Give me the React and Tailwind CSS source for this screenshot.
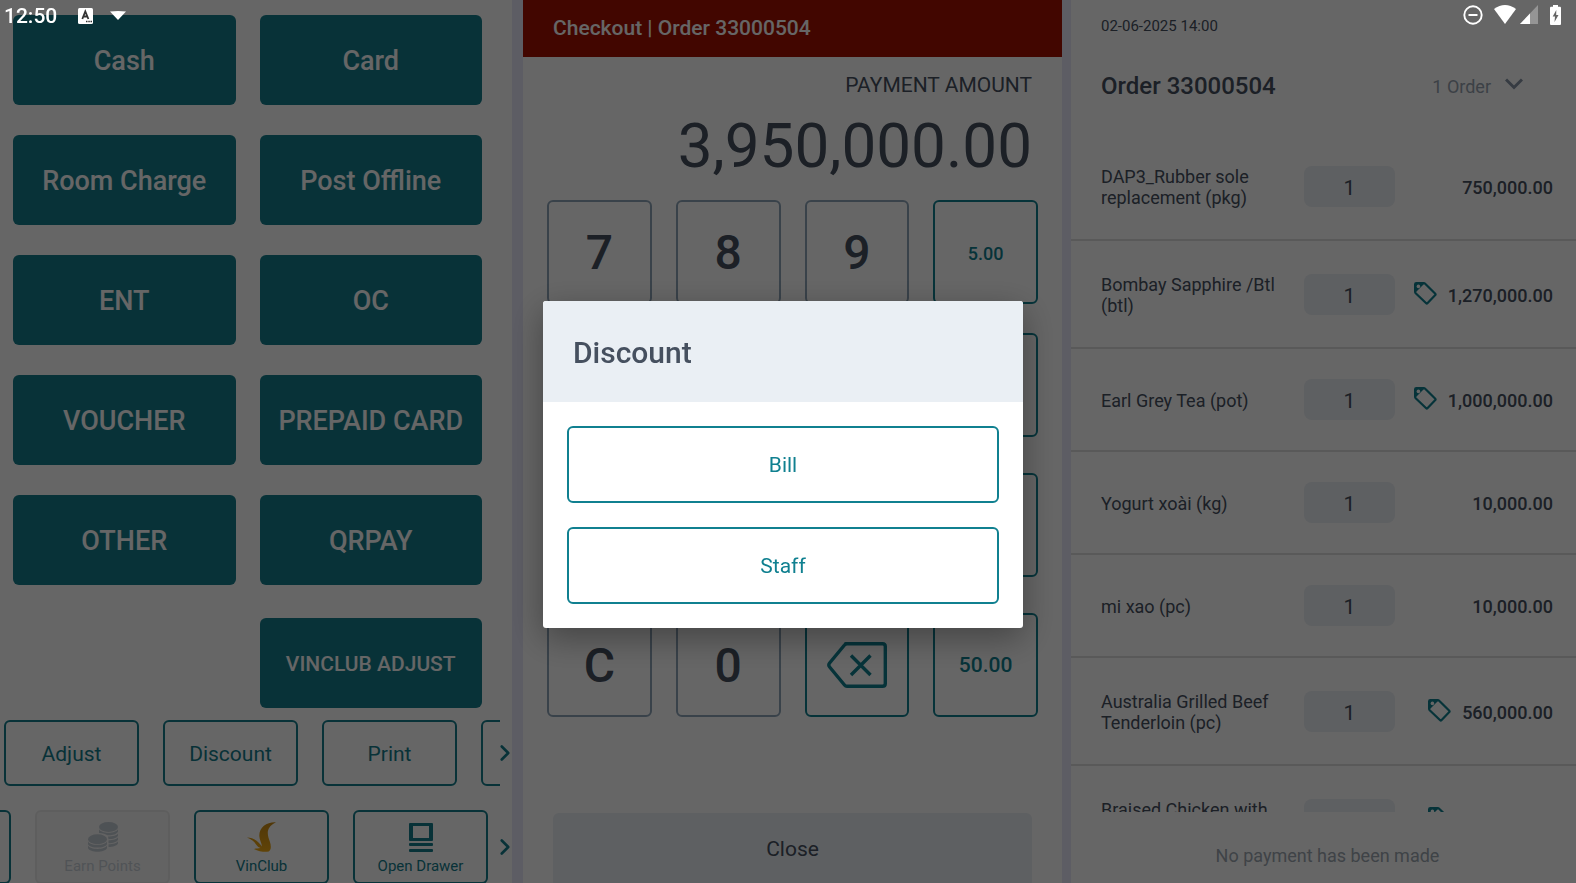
import { ChevronRight } from "lucide-react";

const PAYMENT_METHODS = [
  "Cash",
  "Card",
  "Room Charge",
  "Post Offline",
  "ENT",
  "OC",
  "VOUCHER",
  "PREPAID CARD",
  "OTHER",
  "QRPAY",
];

const ACTIONS = ["Adjust", "Discount", "Print", ""];

const KEY_ROWS = [
  { id: "top", keys: ["7", "8", "9"], amount: "5.00", amountClass: "text-[18px]", gap: "mb-[29px]" },
  { id: "upper", keys: ["", "", ""], amount: "", amountClass: "text-[21px]", gap: "mb-9" },
  { id: "lower", keys: ["", "", ""], amount: "", amountClass: "text-[21px]", gap: "mb-9" },
  { id: "bottom", keys: ["C", "0", "del"], amount: "50.00", amountClass: "text-[21px]", gap: "" },
];

const ITEMS = [
  { name: "DAP3_Rubber sole replacement (pkg)", qty: 1, price: "750,000.00" },
  { name: "Bombay Sapphire /Btl (btl)", qty: 1, price: "1,270,000.00", tag: true },
  { name: "Earl Grey Tea (pot)", qty: 1, price: "1,000,000.00", tag: true },
  { name: "Yogurt xoài (kg)", qty: 1, price: "10,000.00" },
  { name: "mi xao (pc)", qty: 1, price: "10,000.00" },
  { name: "Australia Grilled Beef Tenderloin (pc)", qty: 1, price: "560,000.00", tag: true },
  { name: "Braised Chicken with ginger (pc)", qty: 1, price: "450,000.00", tag: true },
];

function TagIcon() {
  return (
    <svg width="23" height="23" viewBox="0 0 23 23" className="-mt-1 shrink-0" aria-hidden="true">
      <path
        d="M1.100 9.800V2.300Q1.100 1.100 2.300 1.100H9.800Q10.600 1.100 11.200 1.700L21.300 11.800Q21.900 12.400 21.300 13L13.400 21.200Q12.800 21.800 12.200 21.200L1.700 11.200Q1.100 10.600 1.100 9.800Z"
        fill="none"
        stroke="#108090"
        strokeWidth="2.200"
      />
      <path d="M1 2.200Q1 1 2.200 1H11L1 11Z" fill="#108090" />
      <circle cx="4.400" cy="4.400" r="1.800" fill="#fff" />
    </svg>
  );
}

function BackspaceIcon() {
  return (
    <svg width="60" height="46" viewBox="0 0 60 46" fill="none" stroke="#108090" strokeWidth="3.4" aria-hidden="true">
      <path
        d="M18.5 1.700H55.500Q58.300 1.700 58.300 4.500V41.500Q58.300 44.300 55.500 44.300H20Q18.500 44.300 17.500 43L2.600 25Q1 23 2.600 21L17.500 3Q18.500 1.700 20 1.700Z"
        strokeLinejoin="round"
      />
      <path d="M24 13.500L43.500 33M43.500 13.500L24 33" />
    </svg>
  );
}

function CoinsIcon() {
  return (
    <svg width="30" height="30" viewBox="0 0 30 30" fill="#c4ccd4" aria-hidden="true">
      <ellipse cx="20.5" cy="5" rx="9.500" ry="5" />
      <path d="M11 7.200C13 11.800 28 11.800 30 7.200V9.800C28.500 12.600 23.500 13.500 19.500 13.200C17.500 11.800 15 11.200 11 10.900Z" />
      <path d="M20 14.400C25 14.400 29 13.300 30 11.400V13.800C29 16 25 17.200 20.500 17.200Z" />
      <path d="M20.500 18.300C25 18.200 29 17.200 30 15.300V17.700C29 19.800 25 21.100 20.500 21.200Z" />
      <path d="M20.500 22.300C25 22.200 29 21.200 30 19.300V21.500C29 23.700 25 25 20.500 25.100Z" />
      <ellipse cx="9.500" cy="17.300" rx="9.500" ry="5" />
      <path d="M0 19.500C2 24 17 24 19 19.500V22.200C17 26.700 2 26.700 0 22.200Z" />
      <path d="M0 23.500C2 28 17 28 19 23.500V26C17 31 2 31 0 26Z" />
    </svg>
  );
}

function VinClubIcon() {
  return (
    <svg width="30" height="30" viewBox="0 0 30 30" aria-hidden="true">
      <defs>
        <linearGradient id="vin" x1="0" y1="0" x2="0" y2="1">
          <stop offset="0" stopColor="#c98a14" />
          <stop offset="0.500" stopColor="#dc9a14" />
          <stop offset="1" stopColor="#f2aa16" />
        </linearGradient>
      </defs>
      <path
        d="M29 0.200C20 -0.300 12 5 12.300 14C12.500 18 14.500 20.500 15 24.500C11 19 7 15.800 0 15.500C5 17.500 7.500 20 9.500 23C10.500 24.500 12 25.500 13.500 26C11 26.500 9.500 26.200 7 27C11 29.300 16 30 20 29.800C24.500 29.300 24.500 24.500 22.800 19.500C20.800 13.500 17.500 6 29 0.200Z"
        fill="url(#vin)"
      />
    </svg>
  );
}

function DrawerIcon() {
  return (
    <svg width="24" height="29" viewBox="0 0 24 29" fill="#147d8c" aria-hidden="true">
      <path
        fillRule="evenodd"
        d="M1 0H23Q24 0 24 1V17Q24 18 23 18H1Q0 18 0 17V1Q0 0 1 0ZM4 3V15H20V3Z"
      />
      <rect y="20" width="24" height="3" rx="1" />
      <rect y="26" width="24" height="3" rx="1" />
    </svg>
  );
}

function StatusBar() {
  return (
    <div className="pointer-events-none fixed inset-x-0 top-0 z-50 flex h-[31px] items-center justify-between pl-1 pr-[15px] text-white">
      <div className="flex items-center">
        <span className="text-[21px] font-medium leading-8">12:50</span>
        <svg width="15" height="16" viewBox="0 0 15 16" className="ml-[21px]" aria-hidden="true">
          <rect width="15" height="16" rx="1.5" fill="#fff" />
          <path d="M4.300 11L7.300 3.500L10.400 11M5.300 8.500H9.300" fill="none" stroke="#333" strokeWidth="1.800" />
          <path d="M8 13.500H9.500M10.300 13.500H11.800M12.500 13.500H14" stroke="#333" strokeWidth="1.300" />
        </svg>
        <svg width="16" height="9" viewBox="0 0 16 9" className="ml-[17px]" aria-hidden="true">
          <path d="M0 0.500Q8 -0.500 16 0.500L8 9Z" fill="#fff" />
        </svg>
      </div>
      <div className="flex items-center pb-[2px]">
        <svg width="20" height="20" viewBox="0 0 20 20" fill="none" stroke="#fff" aria-hidden="true">
          <circle cx="10" cy="10" r="8.700" strokeWidth="1.900" />
          <path d="M5.500 10H14.500" strokeWidth="2" />
        </svg>
        <svg width="22" height="19" viewBox="0 0 22 19" className="ml-[11px]" aria-hidden="true">
          <path d="M0 4Q11 -4 22 4L11 19Z" fill="#fff" />
        </svg>
        <svg width="18" height="19" viewBox="0 0 18 19" className="ml-1" aria-hidden="true">
          <path d="M18 0V19H0Z" fill="#fff" fillOpacity="0.300" />
          <path d="M10 8.400V19H0Z" fill="#fff" />
        </svg>
        <svg width="11" height="20" viewBox="0 0 11 20" className="ml-3" aria-hidden="true">
          <path d="M3 0H8V1.800H10Q11 1.800 11 3V19Q11 20 10 20H1Q0 20 0 19V3Q0 1.800 1 1.800H3Z" fill="#fff" />
          <path d="M6.300 5L2.700 11.500H5L4.500 17L8.500 10H6.200Z" fill="#666" />
        </svg>
      </div>
    </div>
  );
}

function PaymentPanel() {
  return (
    <section className="min-w-0 overflow-hidden bg-white pt-[15px]">
      <div className="grid grid-cols-2 gap-x-6 gap-y-[30px] pl-[13px] pr-[30px]">
        {PAYMENT_METHODS.map((method) => (
          <button key={method} className="h-[90px] rounded-md bg-[#147d8c] pt-[2px] text-[27px] font-medium text-white">
            {method}
          </button>
        ))}
      </div>
      <div className="mt-[33px] grid grid-cols-2 gap-x-6 pl-[13px] pr-[30px]">
        <button className="col-start-2 h-[90px] rounded-md bg-[#147d8c] pt-[3px] text-[21px] font-medium text-white">
          VINCLUB ADJUST
        </button>
      </div>

      <div className="mt-3 flex items-center">
        <div className="flex min-w-0 flex-1 gap-6 overflow-hidden pl-1">
          {ACTIONS.map((action) => (
            <button
              key={action}
              aria-label={action || "More"}
              className="h-[66px] w-[135px] shrink-0 rounded-md border-2 border-[#147d8c] pt-[3px] text-[21px] text-[#147d8c]"
            >
              {action}
            </button>
          ))}
        </div>
        <button aria-label="Next actions" className="w-3 text-[#147d8c]">
          <ChevronRight size={26} strokeWidth={2.4} className="-ml-2" />
        </button>
      </div>

      <div className="mt-6 flex items-center">
        <div className="flex min-w-0 flex-1 justify-end gap-6 overflow-hidden pr-3">
          <button aria-label="Previous" className="h-[74px] w-[135px] shrink-0 rounded-md border-2 border-[#147d8c]" />
          <button
            disabled
            className="flex h-[74px] w-[135px] shrink-0 flex-col items-center rounded-md border-2 border-[#ececec] bg-[#f8f8f8] pt-[10px] text-[15px] leading-7 text-[#c9d0d8]"
          >
            <CoinsIcon />
            Earn Points
          </button>
          <button className="flex h-[74px] w-[135px] shrink-0 flex-col items-center rounded-md border-2 border-[#147d8c] pt-[10px] text-[15px] leading-7 text-[#147d8c]">
            <VinClubIcon />
            VinClub
          </button>
          <button className="flex h-[74px] w-[135px] shrink-0 flex-col items-center rounded-md border-2 border-[#147d8c] pt-[11px] text-[15px] leading-7 text-[#147d8c]">
            <DrawerIcon />
            Open Drawer
          </button>
        </div>
        <button aria-label="Next tools" className="w-3 text-[#147d8c]">
          <ChevronRight size={26} strokeWidth={2.4} className="-ml-2" />
        </button>
      </div>
    </section>
  );
}

function CheckoutPanel() {
  return (
    <section className="flex min-w-0 flex-col overflow-hidden border-l-[11px] border-r-[9px] border-[#e8e8fa] bg-white text-[#46505f]">
      <header className="h-[57px] shrink-0 bg-[#a50f00] pl-[30px]">
        <h1 className="text-[21px] font-medium leading-[56px] text-white">Checkout | Order 33000504</h1>
      </header>
      <div className="pr-[30px] pt-[12px] text-right">
        <p className="text-[21px] leading-8">PAYMENT AMOUNT</p>
        <p className="text-[62px] leading-[90px]">3,950,000.00</p>
      </div>
      <div className="mt-[9px] px-6">
        {KEY_ROWS.map((row) => (
          <div key={row.id} className={`grid grid-cols-4 gap-6 ${row.gap}`}>
            {row.keys.map((key, i) =>
              key === "del" ? (
                <button
                  key={i}
                  aria-label="Delete"
                  className="flex h-[104px] items-center justify-center rounded-md border-2 border-[#108090]"
                >
                  <BackspaceIcon />
                </button>
              ) : (
                <button
                  key={i}
                  className="h-[104px] rounded-md border-2 border-[#8fa5b9] pt-[2px] text-[48px] font-medium"
                >
                  {key}
                </button>
              )
            )}
            <button
              className={`h-[104px] rounded-md border-2 border-[#108090] pt-[2px] font-medium text-[#108090] ${row.amountClass}`}
            >
              {row.amount}
            </button>
          </div>
        ))}
      </div>
      <div className="mt-24 px-[30px]">
        <button className="h-[74px] w-full rounded-md bg-[#eaeff4] text-[21px]">Close</button>
      </div>
    </section>
  );
}

function OrderPanel() {
  return (
    <section className="flex min-h-0 min-w-0 flex-col bg-white text-[#46505f]">
      <header className="pb-[31px] pl-[30px] pr-[53px] pt-4">
        <p className="text-[15px] leading-5">02-06-2025 14:00</p>
        <div className="mt-[34px] flex items-center justify-between">
          <h2 className="text-[24px] font-medium leading-8">Order 33000504</h2>
          <button className="flex items-center gap-[14px] text-[18px] text-[#96a2af]">
            1 Order
            <svg
              width="18"
              height="12"
              viewBox="0 0 18 12"
              fill="none"
              stroke="#8795a5"
              strokeWidth="3"
              className="-mt-1"
              aria-hidden="true"
            >
              <path d="M1 1.500L9 9.500L17 1.500" />
            </svg>
          </button>
        </div>
      </header>
      <ul className="min-h-0 flex-1 overflow-hidden">
        {ITEMS.map((item) => (
          <li key={item.name} className="flex items-center border-b-2 border-[#dedede] pl-[30px] pr-[23px]">
            <span className="flex-1 pb-[31px] pr-6 pt-[33px] text-[18px] leading-[21px]">{item.name}</span>
            <input
              readOnly
              value={item.qty}
              aria-label={`Quantity of ${item.name}`}
              className="my-[30px] h-[41px] w-[91px] rounded-lg bg-[#eaeff4] pt-[3px] text-center text-[21px]"
            />
            <span className="flex w-[158px] items-center justify-end gap-[11px] pt-[2px] text-[18px] font-medium">
              {item.tag && <TagIcon />}
              {item.price}
            </span>
          </li>
        ))}
      </ul>
      <footer className="h-[71px] shrink-0 pl-2 pt-[30px] text-center text-[18px] leading-7 text-[#9da7b1]">
        No payment has been made
      </footer>
    </section>
  );
}

function DiscountDialog() {
  return (
    <div className="fixed inset-0 z-40 flex items-center justify-center bg-black/60 pr-[10px] pt-[46px]">
      <div
        role="dialog"
        aria-labelledby="discount-title"
        className="w-[480px] overflow-hidden rounded-[3px] bg-white shadow-[0_10px_34px_rgba(0,0,0,0.35)]"
      >
        <h2
          id="discount-title"
          className="bg-[#eaeff4] pb-[29px] pl-[30px] pt-8 text-[30px] font-medium leading-10 text-[#46505f]"
        >
          Discount
        </h2>
        <div className="flex flex-col gap-6 p-6">
          <button className="h-[77px] rounded-md border-2 border-[#108090] pt-[3px] text-[21px] text-[#108090]">
            Bill
          </button>
          <button className="h-[77px] rounded-md border-2 border-[#108090] pt-[3px] text-[21px] text-[#108090]">
            Staff
          </button>
        </div>
      </div>
    </div>
  );
}

export default function App() {
  return (
    <div className="h-screen overflow-hidden font-[Roboto,sans-serif]">
      <main className="grid h-full grid-cols-[512fr_559fr_505fr] grid-rows-[100%]">
        <PaymentPanel />
        <CheckoutPanel />
        <OrderPanel />
      </main>
      <DiscountDialog />
      <StatusBar />
    </div>
  );
}
